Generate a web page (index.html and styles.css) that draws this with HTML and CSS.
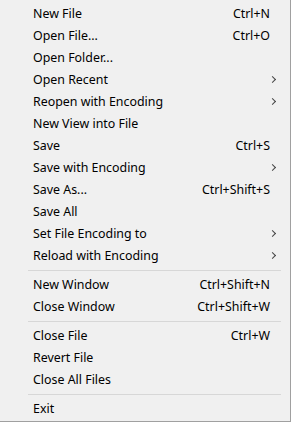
FILE: index.html
```html
<!DOCTYPE html>
<html lang="en">

<head>
    <title>File Menu</title>
    <link rel="stylesheet" href="styles.css">
</head>

<body>
    <div class="menu">
        <div class="menu-item"><span class="label">New File</span><span class="shortcut">Ctrl+N</span></div>
        <div class="menu-item"><span class="label">Open File...</span><span class="shortcut">Ctrl+O</span></div>
        <div class="menu-item"><span class="label">Open Folder...</span></div>
        <div class="menu-item submenu"><span class="label">Open Recent</span></div>
        <div class="menu-item submenu"><span class="label">Reopen with Encoding</span></div>
        <div class="menu-item"><span class="label">New View into File</span></div>
        <div class="menu-item"><span class="label">Save</span><span class="shortcut">Ctrl+S</span></div>
        <div class="menu-item submenu"><span class="label">Save with Encoding</span></div>
        <div class="menu-item"><span class="label">Save As...</span><span class="shortcut">Ctrl+Shift+S</span></div>
        <div class="menu-item"><span class="label">Save All</span></div>
        <div class="menu-item submenu"><span class="label">Set File Encoding to</span></div>
        <div class="menu-item submenu"><span class="label">Reload with Encoding</span></div>

        <div class="separator"></div>

        <div class="menu-item"><span class="label">New Window</span><span class="shortcut">Ctrl+Shift+N</span></div>
        <div class="menu-item"><span class="label">Close Window</span><span class="shortcut">Ctrl+Shift+W</span></div>

        <div class="separator"></div>

        <div class="menu-item"><span class="label">Close File</span><span class="shortcut">Ctrl+W</span></div>
        <div class="menu-item"><span class="label">Revert File</span></div>
        <div class="menu-item"><span class="label">Close All Files</span></div>

        <div class="separator"></div>

        <div class="menu-item"><span class="label">Exit</span></div>
    </div>
</body>

</html>
```

FILE: styles.css
```css
body {
    margin: 0;
    background-color: #ffffff;
}

.menu {
    width: 291px;
    height: 422px;
    box-sizing: border-box;
    padding-top: 3px;
    background-color: #f0f0f0;
    border-right: 1px solid #a0a0a0;
    border-bottom: 1px solid #a0a0a0;
    font-family: "Noto Sans", "Open Sans", sans-serif;
    font-size: 12.4px;
    color: #000000;
}

.menu-item {
    display: flex;
    align-items: center;
    height: 22px;
    box-sizing: border-box;
    padding-left: 33px;
    padding-right: 20px;
    padding-bottom: 2px;
    position: relative;
}

.label {
    flex: 1;
    white-space: nowrap;
}

.shortcut {
    white-space: nowrap;
}

/* little chevron on items that open a submenu */
.submenu::after {
    content: "";
    position: absolute;
    right: 15px;
    top: 8px;
    width: 4px;
    height: 4px;
    border-right: 1px solid #444444;
    border-bottom: 1px solid #444444;
    transform: rotate(-45deg);
}

.separator {
    height: 1px;
    margin: 3px 9px 3px 28px;
    background-color: #d7d7d7;
}
```
